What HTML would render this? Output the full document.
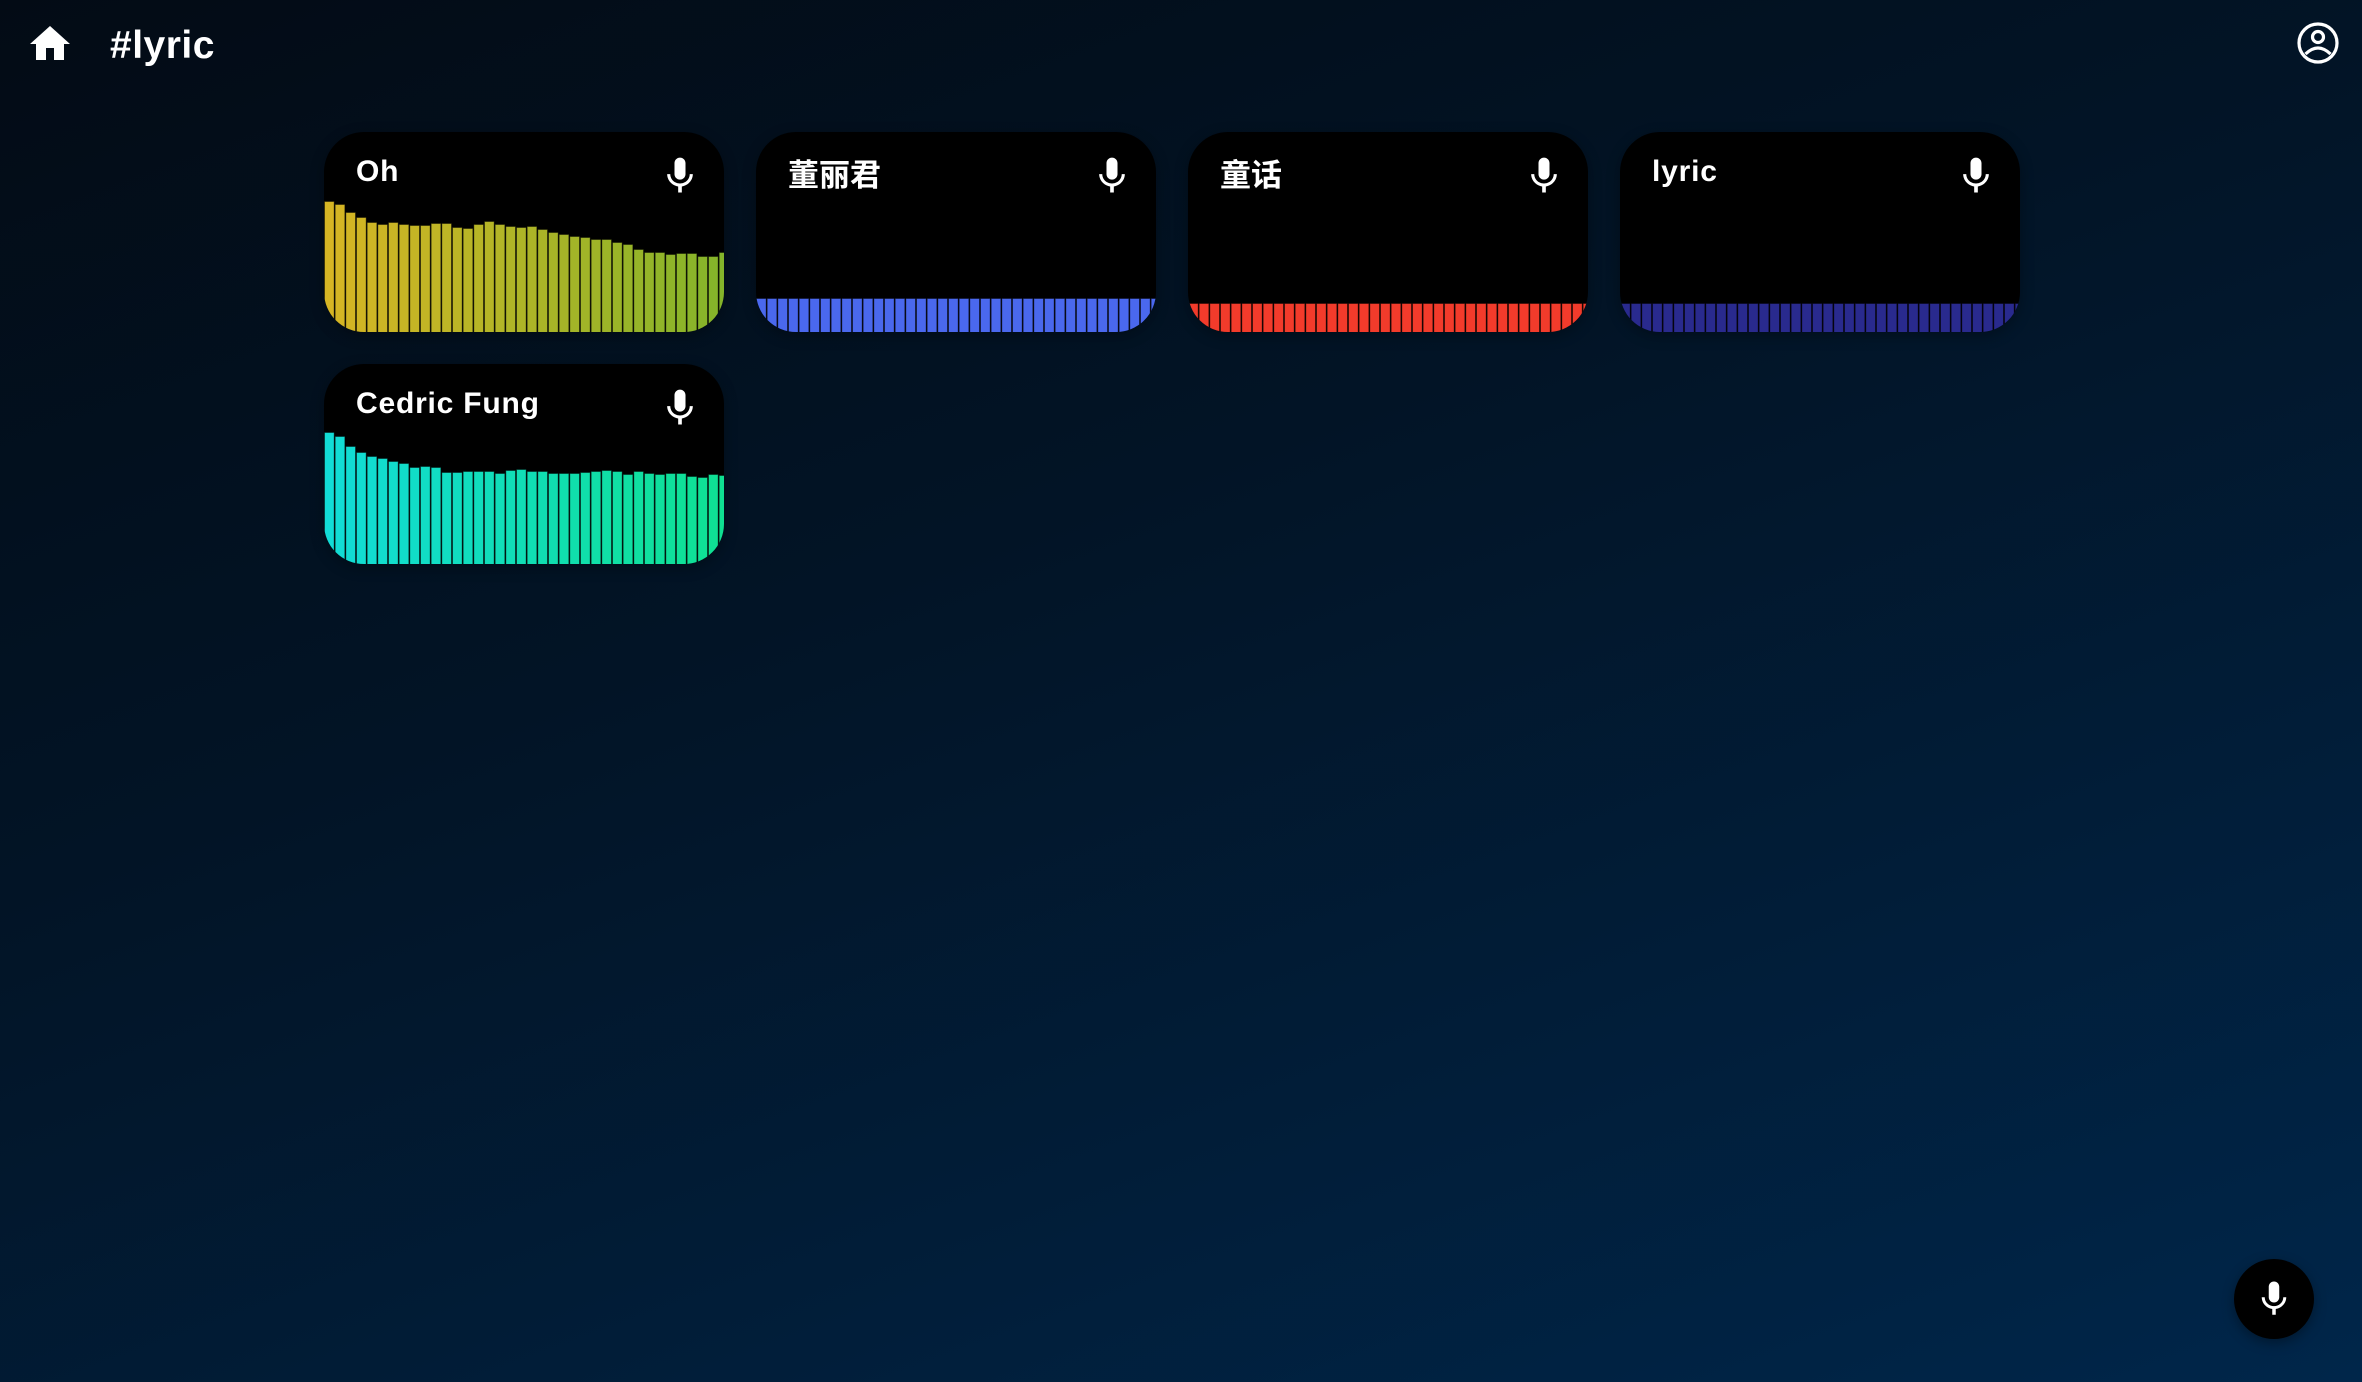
<!DOCTYPE html>
<html><head><meta charset="utf-8">
<style>
html,body{margin:0;padding:0}
body{width:2362px;height:1382px;overflow:hidden;position:relative;
background:linear-gradient(160deg,#030b15 0%,#021426 40%,#00264a 100%);
font-family:"Liberation Sans","Noto Sans CJK SC",sans-serif;color:#fff}
.title{position:absolute;left:110px;top:24px;font-size:39px;font-weight:bold;letter-spacing:0.5px}
.home{position:absolute;left:26px;top:20px}
.prof{position:absolute;left:2295px;top:20px}
.card{position:absolute;width:400px;height:200px;background:#000;border-radius:40px;overflow:hidden;box-shadow:0 4px 14px rgba(0,0,0,.3)}
.card .name{position:absolute;left:32px;top:23px;font-size:30px;font-weight:bold;letter-spacing:0.8px;z-index:2}
.card .cjk{font-family:"Noto Sans CJK SC","WenQuanYi Zen Hei",sans-serif;font-size:31px;font-weight:bold;letter-spacing:0;top:18px}
.card .mic{position:absolute;left:334px;top:22px;z-index:2}
.card svg.bars{position:absolute;left:0;bottom:0}
.fab{position:absolute;left:2234px;top:1259px;width:80px;height:80px;border-radius:50%;background:#000;box-shadow:0 4px 12px rgba(0,0,0,.35)}
.fab svg{position:absolute;left:19px;top:19px}
</style></head><body>
<svg class="home" width="48" height="48" viewBox="0 0 24 24"><path fill="#fff" d="M10 20v-6h4v6h5v-8h3L12 3 2 12h3v8z"/></svg>
<div class="title">#lyric</div>
<svg class="prof" width="46" height="46" viewBox="0 0 46 46"><circle cx="23" cy="23" r="19" fill="none" stroke="#fff" stroke-width="3.2"/><circle cx="23" cy="17" r="5.5" fill="none" stroke="#fff" stroke-width="3.2"/><path d="M10.5 34 Q23 22 35.5 34" fill="none" stroke="#fff" stroke-width="3.2"/></svg>

<div class="card" id="c1" style="left:324px;top:132px"><div class="name">Oh</div></div>
<div class="card" id="c2" style="left:756px;top:132px"><div class="name cjk">董丽君</div></div>
<div class="card" id="c3" style="left:1188px;top:132px"><div class="name cjk">童话</div></div>
<div class="card" id="c4" style="left:1620px;top:132px"><div class="name">lyric</div></div>
<div class="card" id="c5" style="left:324px;top:364px"><div class="name">Cedric Fung</div></div>

<div class="fab"><svg width="42" height="42" viewBox="0 0 24 24"><path fill="#fff" d="M12 14c1.66 0 3-1.340 3-3V5c0-1.66-1.34-3-3-3S9 3.34 9 5v6c0 1.66 1.34 3 3 3zm5.3-3c0 3-2.54 5.1-5.3 5.1S6.7 14 6.7 11H5c0 3.41 2.72 6.23 6 6.72V21h2v-3.28c3.28-.48 6-3.3 6-6.72h-1.7z"/></svg></div>

<script>
var micPath='M12 14c1.66 0 3-1.34 3-3V5c0-1.66-1.34-3-3-3S9 3.34 9 5v6c0 1.66 1.34 3 3 3zm5.3-3c0 3-2.54 5.1-5.3 5.1S6.7 14 6.7 11H5c0 3.41 2.72 6.23 6 6.72V21h2v-3.28c3.28-.48 6-3.3 6-6.72h-1.7z';
function lerp(a,b,t){return Math.round(a+(b-a)*t);}
function hex(c){return [parseInt(c.substr(1,2),16),parseInt(c.substr(3,2),16),parseInt(c.substr(5,2),16)];}
function build(id,heights,c1,c2){
  var card=document.getElementById(id);
  var m='<svg class="mic" width="44" height="44" viewBox="0 0 24 24"><path fill="#fff" d="'+micPath+'"/></svg>';
  card.insertAdjacentHTML('beforeend',m);
  var n=38,pw=400/37.5,s='<svg class="bars" width="400" height="200" viewBox="0 0 400 200">';
  var a=hex(c1),b=hex(c2);
  for(var i=0;i<n;i++){
    var h=heights.length>1?heights[Math.min(i,heights.length-1)]:heights[0];
    var t=i/(n-1);
    var col='rgb('+lerp(a[0],b[0],t)+','+lerp(a[1],b[1],t)+','+lerp(a[2],b[2],t)+')';
    s+='<rect x="'+(i*pw+0.5).toFixed(2)+'" y="'+(200-h+0.5)+'" width="'+(pw-1).toFixed(2)+'" height="'+h+'" fill="'+col+'" stroke="rgba(0,0,0,0.4)" stroke-width="1"/>';
  }
  s+='</svg>';
  card.insertAdjacentHTML('beforeend',s);
}
var y1=[242,252,274,291,306,311,304,311,313,313,307,309,319,322,310,303,312,318,320,318,327,336,340,348,351,355,357,364,372,386,394,396,401,398,399,408,406,396].map(function(v){return Math.round((635-v)/3);});
var y5=[245,257,286,304,316,323,330,336,350,345,349,365,365,360,361,362,368,358,356,360,362,368,367,366,364,360,357,362,369,362,366,370,366,366,376,380,371,374].map(function(v){return Math.round((640-v)/3);});
build('c1',y1,'#d6b524','#84b42a');
build('c2',[34],'#4a68ee','#4a68ee');
build('c3',[29],'#f23b2b','#f23b2b');
build('c4',[29],'#292a8e','#292a8e');
build('c5',y5,'#12dcd6','#0fe092');
</script>
</body></html>
